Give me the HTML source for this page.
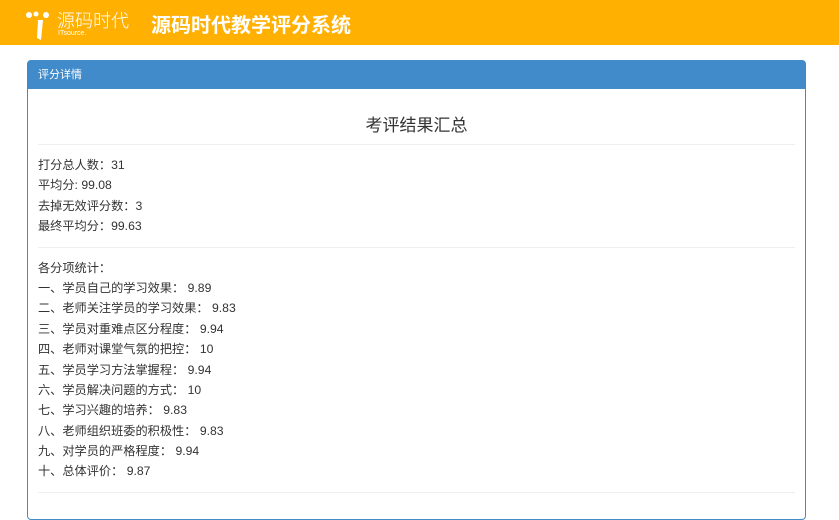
<!DOCTYPE html>
<html><head><meta charset="utf-8"><style>
*{margin:0;padding:0;box-sizing:border-box}
body{width:839px;height:500px;overflow:hidden;background:#fff;font-family:"Liberation Sans","Noto Sans CJK SC",sans-serif;color:#333;font-size:12px}
.hd{height:45px;background:#ffb000;position:relative}
.logo{position:absolute;left:26px;top:6px;color:#fff}
.logo .cn{position:absolute;left:31px;top:1px;font-size:18px;font-weight:300;white-space:nowrap}
.logo .en{position:absolute;left:32px;top:24px;font-size:7px;white-space:nowrap}
.title{position:absolute;left:151px;top:9px;color:#fff;font-size:20px;font-weight:bold;white-space:nowrap}
.panel{position:absolute;left:27px;top:60px;width:779px;height:460px;border:1px solid #428bca;border-radius:4px}
.ph{height:28px;background:#428bca;color:#fff;font-size:11px;line-height:28px;padding-left:10px}
.pb{padding:0 10px}
h3{font-size:17px;font-weight:normal;text-align:center;margin-top:22px;height:33px}
hr{border:0;border-top:1px solid #eee}
.sec{padding:10px 0 10px}
.sec div{height:20.4px;line-height:20.4px;font-size:12.2px}
</style></head><body>
<div class="hd">
<div class="logo">
<svg width="26" height="32" viewBox="0 0 26 32" style="position:absolute;left:0;top:4px"><circle cx="3" cy="5" r="3" fill="#fff"/><circle cx="10" cy="4" r="2.5" fill="#fff"/><circle cx="20" cy="5" r="3" fill="#fff"/><path d="M12 10 L17 10 L15 30 L11 28 Z" fill="#fff"/></svg>
<span class="cn">源码时代</span><span class="en">ITsource.</span></div>
<div class="title">源码时代教学评分系统</div>
</div>
<div class="panel">
<div class="ph">评分详情</div>
<div class="pb">
<h3>考评结果汇总</h3>
<hr>
<div class="sec"><div>打分总人数：31</div><div>平均分: 99.08</div><div>去掉无效评分数：3</div><div>最终平均分：99.63</div></div>
<hr>
<div class="sec"><div>各分项统计：</div>
<div>一、学员自己的学习效果： 9.89</div>
<div>二、老师关注学员的学习效果： 9.83</div>
<div>三、学员对重难点区分程度： 9.94</div>
<div>四、老师对课堂气氛的把控： 10</div>
<div>五、学员学习方法掌握程： 9.94</div>
<div>六、学员解决问题的方式： 10</div>
<div>七、学习兴趣的培养： 9.83</div>
<div>八、老师组织班委的积极性： 9.83</div>
<div>九、对学员的严格程度： 9.94</div>
<div>十、总体评价： 9.87</div></div>
<hr>
</div></div>
</body></html>
